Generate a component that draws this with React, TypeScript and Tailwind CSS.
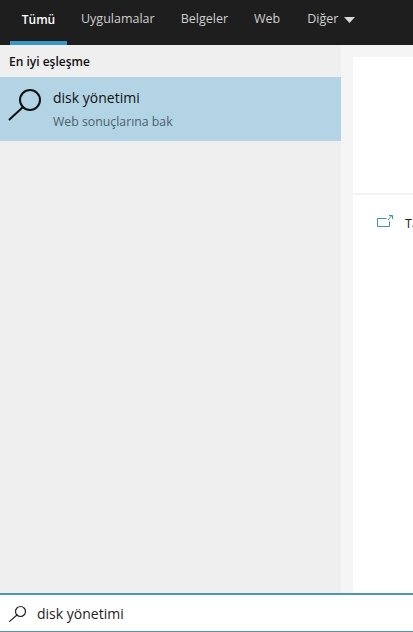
import React from 'react';

const tabs = ['Uygulamalar', 'Belgeler', 'Web'];

const App: React.FC = () => {
  return (
    <div className="flex h-[632px] w-[413px] flex-col overflow-hidden bg-white font-['Open_Sans',sans-serif] text-[13px]">
      {/* top tabs */}
      <div className="flex h-[45px] shrink-0 bg-[#1e1e1e] pl-[10px] text-[#cfcfcf]">
        <div className="flex h-full w-[57px] flex-col">
          <div className="flex flex-1 items-center justify-center pb-[2px] text-[12px] font-semibold text-white">Tümü</div>
          <div className="h-[4px] bg-[#3a96c4]" />
        </div>
        {tabs.map((t, i) => (
          <div key={t} className={`flex items-center pb-[6px] text-[12.5px] ${i === 0 ? 'ml-[14px]' : 'ml-[26px]'}`}>
            {t}
          </div>
        ))}
        <div className="ml-[26px] flex items-center pb-[6px] text-[12.5px]">
          <span className="ml-[1px]">Diğer</span>
          <svg width="11" height="6" viewBox="0 0 11 6" className="ml-[6px]">
            <path d="M0 0h11L5.5 6z" fill="#d8d8d8" />
          </svg>
        </div>
      </div>

      <div className="flex min-h-0 flex-1">
        {/* results */}
        <div className="w-[341px] shrink-0 bg-[#efefef]">
          <div className="flex h-[32px] items-center pl-[9px] pt-[1px] text-[12px] font-semibold text-[#111]">En iyi eşleşme</div>
          <div className="flex h-[64px] bg-[#b3d4e5]">
            <svg width="34" height="34" viewBox="0 0 34 34" className="ml-[8px] mt-[11px] shrink-0" fill="none" stroke="#111" strokeWidth="2">
              <circle cx="22" cy="12" r="10" />
              <path d="M15 19 1.5 31.5" strokeLinecap="round" />
            </svg>
            <div className="ml-[11px] flex flex-col">
              <div className="mt-[11px] text-[14px] leading-[20px] text-[#111]">disk yönetimi</div>
              <div className="mt-[5px] text-[12.3px] leading-[18px] text-[#4a5f6b]">Web sonuçlarına bak</div>
            </div>
          </div>
        </div>

        {/* preview */}
        <div className="flex min-w-0 flex-1 flex-col bg-[#f5f5f5] pl-[12px] pt-[12px]">
          <div className="flex-1 bg-white">
            <div className="h-[138px] border-b-[2px] border-[#f2f2f2]" />
            <div className="flex items-start pl-[24px] pt-[20px]">
              <svg width="16" height="13" viewBox="0 0 16 13" fill="none" stroke="#3a96b4" strokeWidth="1" className="shrink-0">
                <path d="M9.5 3.5h-9v8h12v-5" />
                <path d="M11 5l4-4.5M12 .5h3.5V4" />
              </svg>
              <span className="ml-[12px] text-[12.5px] text-[#222]">Ta</span>
            </div>
          </div>
        </div>
      </div>

      {/* search box */}
      <div className="flex h-[39px] shrink-0 items-center border-t-[2px] border-b-[1px] border-t-[#4a97b8] border-b-[#4a97b8] bg-white">
        <svg width="17" height="17" viewBox="0 0 17 17" className="ml-[9px] shrink-0" fill="none" stroke="#222" strokeWidth="1.2">
          <circle cx="11.5" cy="6.5" r="5" />
          <path d="M8 10 .6 16.4" strokeLinecap="round" />
        </svg>
        <span className="ml-[11px] text-[14px] text-[#222]">disk yönetimi</span>
      </div>
    </div>
  );
};

export default App;
